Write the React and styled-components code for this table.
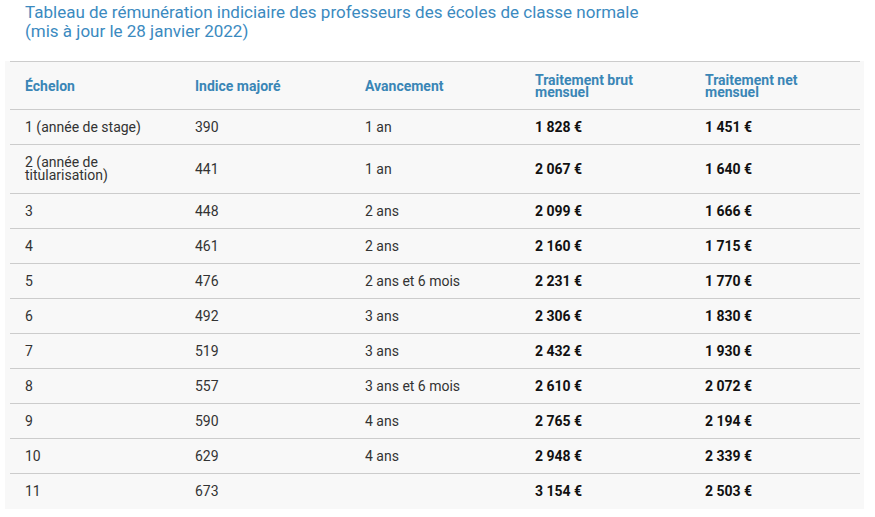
import React from "react";
import styled, { createGlobalStyle } from "styled-components";

const GlobalStyle = createGlobalStyle`
  body {
    margin: 0;
    background: #ffffff;
    font-family: Roboto, "Liberation Sans", Arial, sans-serif;
  }
`;

const Page = styled.div`
  width: 875px;
  height: 517px;
  overflow: hidden;
`;

const Title = styled.h2`
  margin: 0;
  padding: 3px 0 0 25px;
  font-size: 17px;
  line-height: 19px;
  font-weight: 400;
  color: #3b8abf;
`;

const Panel = styled.div`
  margin: 20px 0 0 5px;
  width: 859px;
  padding: 0 5px;
  box-sizing: border-box;
  background: #f8f8f8;
`;

const Table = styled.table`
  width: 850px;
  border-collapse: collapse;
  table-layout: fixed;
`;

const HeadCell = styled.th`
  height: 47px;
  padding: 0 15px;
  text-align: left;
  vertical-align: middle;
  font-size: 14px;
  line-height: 12px;
  font-weight: 700;
  color: #3a86b6;
  border-top: 1px solid #cccccc;
  border-bottom: 1px solid #cccccc;
`;

const Row = styled.tr`
  height: ${(p) => (p.$tall ? 49 : 35)}px;
  border-bottom: ${(p) => (p.$last ? "none" : "1px solid #cccccc")};
`;

const Cell = styled.td`
  padding: 0 15px;
  vertical-align: middle;
  font-size: 14px;
  line-height: 13px;
  color: ${(p) => (p.$bold ? "#111111" : "#333333")};
  font-weight: ${(p) => (p.$bold ? 700 : 400)};
`;

const headers = [
  "Échelon",
  "Indice majoré",
  "Avancement",
  "Traitement brut mensuel",
  "Traitement net mensuel",
];

const rows = [
  ["1 (année de stage)", "390", "1 an", "1 828 €", "1 451 €"],
  ["2 (année de titularisation)", "441", "1 an", "2 067 €", "1 640 €"],
  ["3", "448", "2 ans", "2 099 €", "1 666 €"],
  ["4", "461", "2 ans", "2 160 €", "1 715 €"],
  ["5", "476", "2 ans et 6 mois", "2 231 €", "1 770 €"],
  ["6", "492", "3 ans", "2 306 €", "1 830 €"],
  ["7", "519", "3 ans", "2 432 €", "1 930 €"],
  ["8", "557", "3 ans et 6 mois", "2 610 €", "2 072 €"],
  ["9", "590", "4 ans", "2 765 €", "2 194 €"],
  ["10", "629", "4 ans", "2 948 €", "2 339 €"],
  ["11", "673", "", "3 154 €", "2 503 €"],
];

export default function App() {
  return (
    <Page>
      <GlobalStyle />
      <Title>
        Tableau de rémunération indiciaire des professeurs des écoles de classe normale
        <br />
        (mis à jour le 28 janvier 2022)
      </Title>
      <Panel>
        <Table>
          <thead>
            <tr>
              {headers.map((h) => (
                <HeadCell key={h}>{h}</HeadCell>
              ))}
            </tr>
          </thead>
          <tbody>
            {rows.map((r, i) => (
              <Row key={r[0]} $tall={i === 1} $last={i === rows.length - 1}>
                {r.map((c, j) => (
                  <Cell key={j} $bold={j >= 3}>
                    {c}
                  </Cell>
                ))}
              </Row>
            ))}
          </tbody>
        </Table>
      </Panel>
    </Page>
  );
}
